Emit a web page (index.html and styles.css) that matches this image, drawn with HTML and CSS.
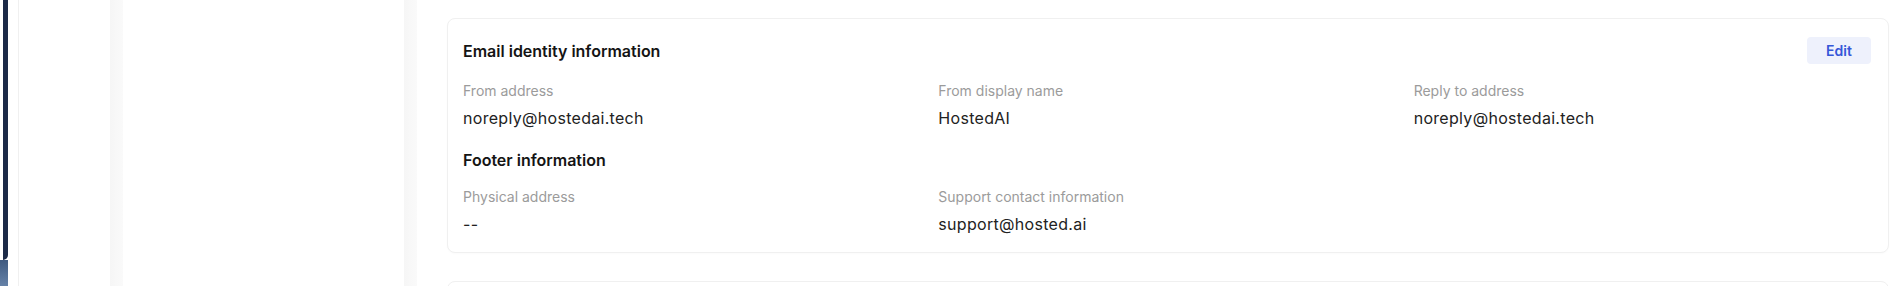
FILE: index.html
```html
<!DOCTYPE html>
<html lang="en">
<head>
<meta charset="utf-8">
<title>Email settings</title>
<link rel="stylesheet" href="styles.css">
</head>
<body>
<div class="app">
  <div class="rail">
    <div class="rail-dark"></div>
    <div class="rail-foot"></div>
  </div>
  <div class="spacer"></div>
  <div class="nav"></div>
  <div class="band"></div>
  <div class="panel"></div>
  <div class="band band-right"></div>
  <main class="main">
    <section class="card">
      <div class="card-head">
        <h2 class="section-title">Email identity information</h2>
        <button class="edit-btn" type="button">Edit</button>
      </div>
      <div class="fields">
        <div class="field">
          <div class="label">From address</div>
          <div class="value">noreply@hostedai.tech</div>
        </div>
        <div class="field">
          <div class="label">From display name</div>
          <div class="value">HostedAI</div>
        </div>
        <div class="field">
          <div class="label">Reply to address</div>
          <div class="value">noreply@hostedai.tech</div>
        </div>
      </div>
      <h2 class="section-title sub-title">Footer information</h2>
      <div class="fields fields-footer">
        <div class="field">
          <div class="label">Physical address</div>
          <div class="value">--</div>
        </div>
        <div class="field">
          <div class="label">Support contact information</div>
          <div class="value">support@hosted.ai</div>
        </div>
        <div class="field"></div>
      </div>
    </section>
    <section class="card card-next"></section>
  </main>
</div>
</body>
</html>
```

FILE: styles.css
```css
* {
  box-sizing: border-box;
}

html, body {
  margin: 0;
  padding: 0;
  background: #ffffff;
}

body {
  font-family: Inter, "Noto Sans", "Liberation Sans", sans-serif;
  color: #1a1a1a;
}

.app {
  display: flex;
  height: 286px;
  overflow: hidden;
}

.rail {
  width: 8px;
  flex: none;
  display: flex;
  flex-direction: column;
  background: #ffffff;
}

.rail-dark {
  margin-left: 3px;
  width: 5px;
  height: 260px;
  background: #1c2a48;
  border-bottom-right-radius: 6px;
}

.rail-foot {
  flex: 1;
  background: linear-gradient(to bottom, #3f5a80, #6682a8);
}

.spacer {
  width: 10px;
  flex: none;
}

.nav {
  width: 92px;
  flex: none;
  border-left: 1px solid #f0f0f0;
}

.band {
  width: 13px;
  flex: none;
  background: linear-gradient(to right, #f6f6f6, #fafafa);
}

.panel {
  width: 281px;
  flex: none;
}

.main {
  flex: 1;
  padding: 18px 12px 0 30px;
  display: flex;
  flex-direction: column;
  gap: 28px;
}

.card {
  flex: none;
  border: 1px solid #f0f0f0;
  border-radius: 8px;
  background: #ffffff;
  padding: 18px 17px 16px 15px;
  box-shadow: 0 1px 2px rgba(0, 0, 0, 0.02);
}

.card-next {
  height: 60px;
}

.card-head {
  display: flex;
  justify-content: space-between;
  align-items: center;
  height: 27px;
}

.section-title {
  margin: 0;
  font-size: 16px;
  line-height: 24px;
  font-weight: 600;
  color: #141414;
  letter-spacing: 0;
}

.sub-title {
  margin-top: 18px;
}

.edit-btn {
  width: 64px;
  height: 27px;
  border: none;
  border-radius: 4px;
  background: #eef1fc;
  color: #3557d8;
  font-family: Inter, "Noto Sans", sans-serif;
  font-size: 14px;
  font-weight: 600;
  padding: 0;
  cursor: pointer;
}

.fields {
  display: grid;
  grid-template-columns: repeat(3, 1fr);
  column-gap: 18px;
  margin-top: 17px;
}

.fields-footer {
  margin-top: 15px;
}

.field {
  display: flex;
  flex-direction: column;
  gap: 5px;
}

.label {
  font-size: 14px;
  line-height: 20px;
  color: #9b9b9b;
}

.value {
  font-size: 16px;
  line-height: 24px;
  color: #222222;
  letter-spacing: 0.3px;
}
```
